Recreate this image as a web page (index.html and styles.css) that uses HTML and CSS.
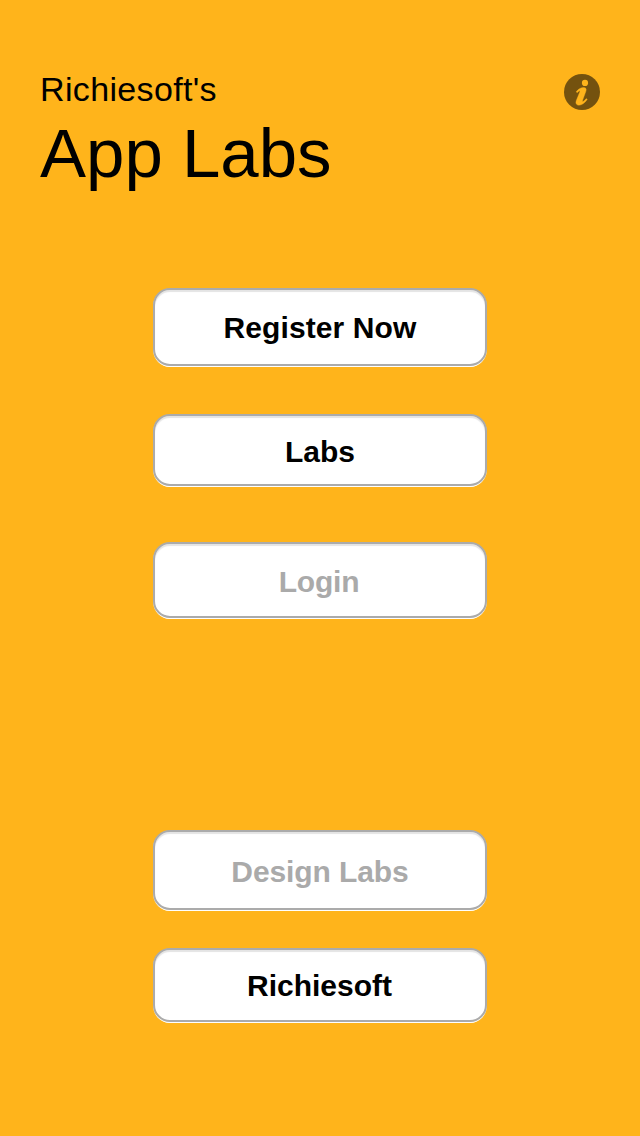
FILE: index.html
```html
<!DOCTYPE html>
<html lang="en">
<head>
<meta charset="utf-8">
<title>App Labs</title>
<link rel="stylesheet" href="styles.css">
</head>
<body>
<header class="header">
  <div>
    <p class="owner">Richiesoft's</p>
    <h1 class="title">App Labs</h1>
  </div>
  <svg class="info" width="36" height="36" viewBox="0 0 36 36" role="img" aria-label="Info">
    <circle cx="18" cy="18" r="18" fill="#74520f"/>
    <circle cx="21" cy="8.9" r="3.1" fill="#ffb41b"/>
    <path d="M12.2 17.8C14.5 14.6 17.3 13.6 19.5 13.6C22.1 13.6 22.7 15.2 21.8 17.6L18.7 25.9C18.1 27.7 18.8 28 20.1 26.8L22.4 24.6L23.2 25.5C20.5 29.2 17.7 31.2 14.9 31.2C12.2 31.2 11.3 29.3 12.3 26.6L15.6 18.5C16.3 16.8 15.6 16.4 14.5 17.4L13.1 18.7Z" fill="#ffb41b" stroke="#ffb41b" stroke-width=".4"/>
  </svg>
</header>
<main class="menu">
  <button class="button register"><span>Register Now</span></button>
  <button class="button labs"><span>Labs</span></button>
  <button class="button login" disabled><span>Login</span></button>
  <button class="button design" disabled><span>Design Labs</span></button>
  <button class="button site"><span>Richiesoft</span></button>
</main>
</body>
</html>
```
FILE: styles.css
```css
* { box-sizing: border-box; }
body {
  margin: 0;
  height: 1136px;
  background: #ffb41b;
  color: #000;
  font-family: "Liberation Sans", Arial, sans-serif;
}
.header {
  display: flex;
  justify-content: space-between;
  height: 288px;
  padding: 69px 40px 0;
}
.owner { margin: 0; font-size: 34px; line-height: 40px; letter-spacing: 0.35px; }
.title { margin: 5px 0 0; font-size: 69px; line-height: 80px; font-weight: 400; }
.info { margin-top: 5px; }
.menu { display: flex; flex-direction: column; align-items: center; }
.button {
  width: 334px;
  padding: 2px 0 0;
  border: 2px solid #ababab;
  border-radius: 17px;
  background: #fff;
  box-shadow: 0 2px 0 -1px #fff, 0 1px 0 #ffe2a6, inset 0 2px 1px #e4e4e4;
  color: #000;
  font: 700 30px/36px "Liberation Sans", Arial, sans-serif;
}
.button:disabled { color: #aaa; }
.register { height: 78px; letter-spacing: 0.1px; }
.labs { height: 72px; margin-top: 48px; padding-top: 3px; }
.login { height: 76px; margin-top: 56px; padding: 4px 2px 0 0; letter-spacing: -0.2px; }
.design { height: 80px; margin-top: 212px; padding-top: 4px; letter-spacing: -0.1px; }
.site { height: 74px; margin-top: 38px; padding-right: 1px; }
```
